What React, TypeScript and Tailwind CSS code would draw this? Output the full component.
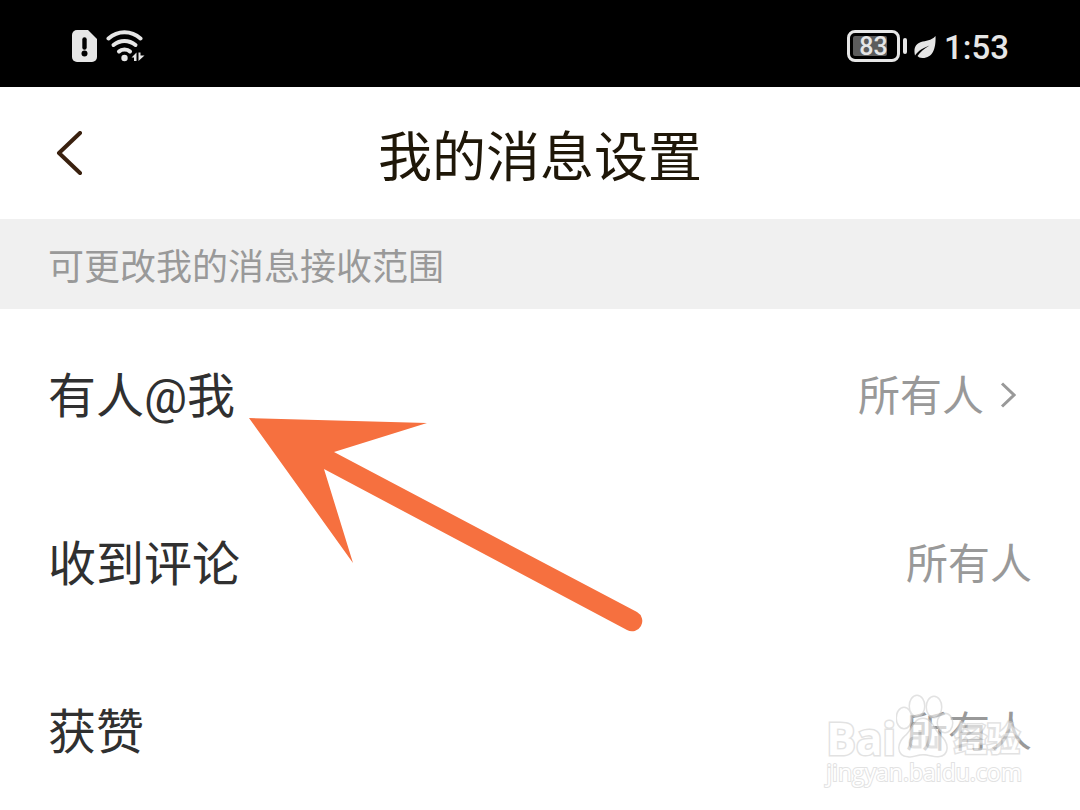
import type { ReactNode } from 'react';

type Setting = {
  label: string;
  value: string;
  chevron?: boolean;
};

const SETTINGS: Setting[] = [
  { label: '有人@我', value: '所有人', chevron: true },
  { label: '收到评论', value: '所有人' },
  { label: '获赞', value: '所有人' },
];

function SimAlertIcon() {
  return (
    <svg viewBox="0 0 26 32" className="h-8 w-[26px]" aria-hidden="true">
      <path d="M5 0h11l9 9v18a5 5 0 0 1-5 5H5a5 5 0 0 1-5-5V5a5 5 0 0 1 5-5Z" fill="#e6e6e6" />
      <path d="M12.5 9.5v8" stroke="#000" strokeWidth="4.4" strokeLinecap="round" />
      <circle cx="12.5" cy="23.5" r="3" fill="#000" />
    </svg>
  );
}

function WifiIcon() {
  return (
    <svg viewBox="0 0 40 32" className="h-8 w-10" aria-hidden="true">
      <g fill="none" stroke="#e6e6e6" strokeWidth="4" strokeLinecap="round">
        <path d="M2.5 8.5Q9.5 2.3 18.5 2.3T34.5 8.5" />
        <path d="M7.5 15Q12.5 11 18.5 11T29.5 15" />
        <path d="M13 21.5Q15 19.5 18.5 19.5T24 21.5" />
      </g>
      <circle cx="18.5" cy="28" r="3.2" fill="#e6e6e6" />
      <path d="M25.5 27.5L30.5 22.5v8.5h-2.5v-3.5ZM32.5 22.5h2v3h4l-6 5.5Z" fill="#e6e6e6" />
    </svg>
  );
}

function Battery({ level }: { level: number }) {
  return (
    <div className="flex items-center gap-[3px]">
      <div className="h-8 w-[53px] rounded-lg border-3 border-[#e6e6e6] p-[3px]">
        <div className="relative h-full">
          <div className="h-full rounded-xs bg-[#5c5c5c]" style={{ width: `${level}%` }} />
          <span className="absolute inset-0 flex items-center justify-center pt-0.5 text-[25px] leading-none font-medium">
            {level}
          </span>
        </div>
      </div>
      <div className="h-4 w-1 rounded-full bg-[#e6e6e6]" />
    </div>
  );
}

function LeafIcon() {
  return (
    <svg viewBox="0 0 22 23" className="h-[23px] w-[22px]" aria-hidden="true">
      <path
        d="M21.5 0C22 10 20 22 8.5 22 6 22 4.5 21 3.5 20 6 16 10 13 15.5 9.500 9 12 4.500 14.500 1 19.5-.5 13 1 8 7 6 12 4.5 17 5 21.5 0Z"
        fill="#e6e6e6"
      />
    </svg>
  );
}

function StatusBar() {
  return (
    <div className="flex h-[87px] items-center justify-between bg-black pt-1 pr-[71px] pl-[72px] text-[#e6e6e6]">
      <div className="flex items-center gap-2">
        <SimAlertIcon />
        <WifiIcon />
      </div>
      <div className="flex items-center">
        <Battery level={83} />
        <div className="ml-[7px] pt-1">
          <LeafIcon />
        </div>
        <span className="ml-2 pt-1 text-[33px] leading-none font-medium">1:53</span>
      </div>
    </div>
  );
}

function Header({ children }: { children: ReactNode }) {
  return (
    <header className="grid h-[132px] grid-cols-[1fr_auto_1fr] items-center px-14">
      <button type="button" aria-label="返回" className="justify-self-start">
        <svg
          viewBox="0 0 28 44"
          className="h-11 w-7"
          fill="none"
          stroke="#3a210f"
          strokeWidth="4"
          strokeLinecap="round"
          strokeLinejoin="round"
        >
          <path d="M24 2L3 22L24 42" />
        </svg>
      </button>
      <h1 className="pt-3 text-[54px] leading-none text-[#1f1708]">{children}</h1>
    </header>
  );
}

function SettingRow({ label, value, chevron }: Setting) {
  return (
    <li>
      <button type="button" className="flex h-[168px] w-full items-center justify-between px-12 pt-1 text-left">
        <span className="pt-1 text-[48px] leading-none text-[#303030]">{label}</span>
        <span className="flex items-center text-[42px] leading-none text-[#999999]">
          <span className="pt-1">{value}</span>
          {chevron && (
            <svg
              viewBox="0 0 16 26"
              className="mr-4 ml-4 h-[26px] w-4"
              fill="none"
              stroke="#999999"
              strokeWidth="3"
              aria-hidden="true"
            >
              <path d="M2 1.5L14 13L2 24.5" />
            </svg>
          )}
        </span>
      </button>
    </li>
  );
}

function PointerArrow() {
  return (
    <svg
      viewBox="0 0 394 214"
      className="pointer-events-none absolute top-[418px] left-[249px] h-[214px] w-[394px]"
      aria-hidden="true"
    >
      <path d="M0 0L178 5L85 34L388 194A10 10 0 0 1 378 212L75 51L104 145Z" fill="#f6703f" />
    </svg>
  );
}

function Watermark() {
  return (
    <div className="pointer-events-none absolute top-[694px] right-[58px] text-white opacity-60 [-webkit-text-stroke:3px_#d0d0d0] [paint-order:stroke_fill]">
      <div className="flex h-16 items-end">
        <span className="font-['Open_Sans','Liberation_Sans',sans-serif] text-[44px] leading-[40px] font-bold">Bai</span>
        <svg viewBox="0 0 58 64" className="h-16 w-[58px]" fill="#fff" stroke="#d0d0d0" strokeWidth="3" aria-hidden="true">
          <ellipse cx="8" cy="24" rx="7" ry="10" />
          <ellipse cx="21" cy="12" rx="7" ry="10" />
          <ellipse cx="38" cy="13" rx="7" ry="10" />
          <ellipse cx="49" cy="29" rx="7" ry="9" />
          <path d="M27 25C36 25 37 35 43 41C53 49 53 61 42 62C36 62 33 60 27 60S18 63 12 62C1 61 1 49 11 41C17 35 18 25 27 25Z" />
          <path d="M24 36v17h-6q-4 0-4-4.500t4-4.500h6M31 42v7q0 4 4 4h5V42" fill="none" />
        </svg>
        <span className="text-[33px] leading-[36px] font-bold">经验</span>
      </div>
      <div className="font-['Open_Sans','Liberation_Sans',sans-serif] text-[23px] leading-7 [-webkit-text-stroke:2px_#d0d0d0]">
        jingyan.baidu.com
      </div>
    </div>
  );
}

export default function App() {
  return (
    <div className="relative h-screen overflow-hidden bg-white font-[Roboto,'Noto_Sans_CJK_SC',sans-serif]">
      <StatusBar />
      <Header>我的消息设置</Header>
      <main>
        <p className="flex h-[90px] items-center bg-[#f0f0f0] px-12 pt-2 text-[36px] leading-none text-[#999999]">
          可更改我的消息接收范围
        </p>
        <ul>
          {SETTINGS.map((s) => (
            <SettingRow key={s.label} {...s} />
          ))}
        </ul>
      </main>
      <PointerArrow />
      <Watermark />
    </div>
  );
}
